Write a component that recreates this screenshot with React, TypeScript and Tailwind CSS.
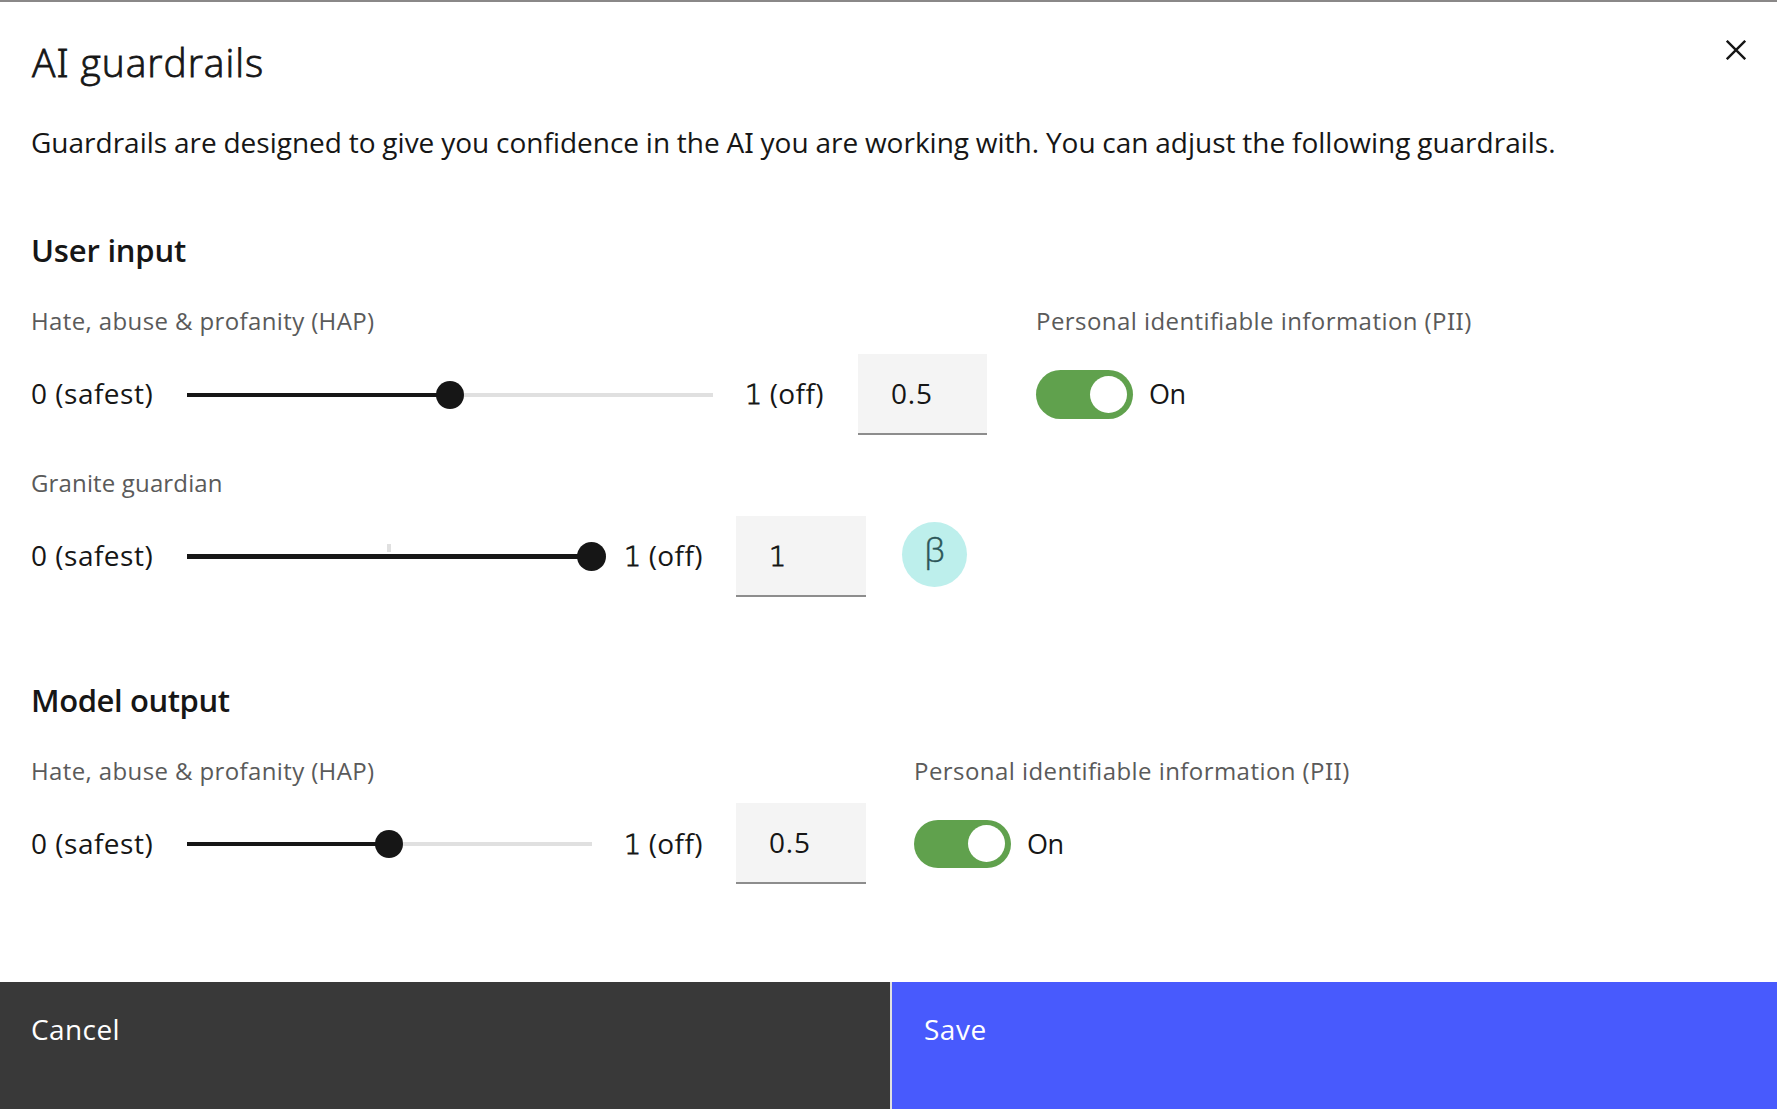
import type { ReactNode } from "react";

const SerifI = ({ children }: { children: ReactNode }) => (
  <span className="font-['Noto_Sans',sans-serif]">{children}</span>
);

// Numeral with a foot serif, thickened to the weight of the surrounding text.
const One = () => (
  <span className="inline-block w-[17px] text-[27px] leading-none font-extralight tracking-normal font-['DejaVu_Sans',sans-serif] [-webkit-text-stroke:0.9px_#161616]">
    1
  </span>
);

function Slider({
  percent,
  full = false,
  tick = false,
  width,
}: {
  percent: number;
  full?: boolean;
  tick?: boolean;
  width: string;
}) {
  return (
    <div className={`relative flex h-[81px] shrink-0 items-center ${width}`}>
      <div className={`w-full bg-[#e0e0e0] ${full ? "h-[5px]" : "h-1"}`}>
        <div className="h-full bg-[#161616]" style={{ width: `${percent}%` }} />
      </div>
      {tick && <span className="absolute top-[28px] left-[200px] h-2 w-1 bg-[#e0e0e0]" />}
      <span
        className={`absolute rounded-full bg-[#161616] ${full ? "top-[26px] -ml-[15px] size-[29px]" : "top-[27px] -ml-[14.5px] size-7"}`}
        style={{ left: `${percent}%` }}
      />
    </div>
  );
}

function NumberField({ width, children }: { width: string; children: ReactNode }) {
  return (
    <div
      className={`flex h-[81px] shrink-0 items-center border-b-2 border-[#8d8d8d] bg-[#f4f4f4] pb-[2px] pl-[33px] tracking-[0.8px] ${width}`}
    >
      <span>{children}</span>
    </div>
  );
}

function Label({ children, spacing }: { children: ReactNode; spacing: string }) {
  return (
    <div
      className={`h-8 text-2xl leading-8 whitespace-nowrap text-[#5a5a5a] [font-feature-settings:'liga'_1] ${spacing}`}
    >
      {children}
    </div>
  );
}

const Safest = ({ pad = "pb-[3px]" }: { pad?: string }) => (
  <span className={`w-[156px] shrink-0 tracking-[0.5px] whitespace-nowrap ${pad}`}>0 (safest)</span>
);

const Off = ({ width, pad = "pb-[3px]" }: { width: string; pad?: string }) => (
  <span className={`shrink-0 tracking-[0.4px] whitespace-nowrap ${pad} ${width}`}>
    <One /> (off)
  </span>
);

function PiiToggle({ height, gap, pad }: { height: string; gap: string; pad: string }) {
  return (
    <div>
      <Label spacing="tracking-[0.44px]">
        Personal identifiable information (P<SerifI>II</SerifI>)
      </Label>
      <div className={`flex h-[81px] items-center ${gap}`}>
        <div className={`flex w-[97px] items-center justify-end rounded-full bg-[#60a14d] pr-1.5 ${height}`}>
          <span className="size-[37px] rounded-full bg-white" />
        </div>
        <span className={`ml-4 text-[27px] tracking-[-0.4px] ${pad}`}>On</span>
      </div>
    </div>
  );
}

const HapLabel = () => <Label spacing="tracking-[0.38px]">Hate, abuse &amp; profanity (HAP)</Label>;

export default function App() {
  return (
    <div className="flex h-[1109px] w-[1777px] flex-col overflow-hidden border-t-2 border-[#8a8888] bg-white font-['Open_Sans',sans-serif] text-[28px] leading-9 text-[#161616]">
      <main className="flex-1 pl-[31px]">
        <header className="flex justify-between pt-9">
          <h1 className="pl-px text-[39px] leading-[48px] font-light tracking-[0.95px] [-webkit-text-stroke:0.8px_#161616]">
            A<SerifI>I</SerifI> guardrails
          </h1>
          <button className="mt-[2px] mr-[31px] size-5" aria-label="Close">
            <svg viewBox="0 0 20 20" className="block size-5" stroke="#161616" strokeWidth="2.4" fill="none">
              <path d="M0.8 0.8 19.2 19.2M19.2 0.8 0.8 19.2" />
            </svg>
          </button>
        </header>
        <p className="mt-[38px] whitespace-nowrap [word-spacing:-0.48px]">
          Guardrails are designed to give you confidence in the A<SerifI>I</SerifI> you are working with. You can
          adjust the following guardrails.
        </p>

        <section className="mt-[70px]">
          <h2 className="text-[31px] leading-10 font-semibold tracking-[-0.2px]">User input</h2>
          <div className="mt-[35px] flex">
            <div className="w-[1005px]">
              <HapLabel />
              <div className="mt-[17px] flex items-center">
                <Safest />
                <Slider percent={50} width="w-[526px]" />
                <Off width="ml-8 w-[113px]" />
                <NumberField width="w-[129px]">0.5</NumberField>
              </div>
            </div>
            <PiiToggle height="h-[49px]" gap="mt-[17px]" pad="pb-[2px]" />
          </div>
          <div className="mt-8">
            <Label spacing="tracking-[0.15px]">Granite guardian</Label>
            <div className="mt-[17px] flex items-center">
              <Safest />
              <Slider percent={100} full tick width="w-[405px]" />
              <Off width="ml-8 w-[112px]" />
              <NumberField width="w-[130px]">
                <One />
              </NumberField>
              <span className="mb-1 ml-9 flex size-[65px] items-center justify-center rounded-full bg-[#bdefec] pb-[9px] text-[33px] font-light text-[#2c5557] [-webkit-text-stroke:0.5px_#2c5557]">
                β
              </span>
            </div>
          </div>
        </section>

        <section className="mt-[83px]">
          <h2 className="text-[31px] leading-10 font-semibold tracking-[-0.4px]">Model output</h2>
          <div className="mt-[35px] flex">
            <div className="w-[883px]">
              <HapLabel />
              <div className="mt-4 flex items-center">
                <Safest pad="pb-px" />
                <Slider percent={50} width="w-[405px]" />
                <Off width="ml-8 w-[112px]" pad="pb-px" />
                <NumberField width="w-[130px]">0.5</NumberField>
              </div>
            </div>
            <PiiToggle height="h-12" gap="mt-4" pad="pb-0" />
          </div>
        </section>
      </main>

      <footer className="flex h-[127px] shrink-0 gap-[2px] bg-[#e0e0e0] text-white">
        <button className="w-[890px] bg-[#393939] pt-[29px] pl-[31px] text-left tracking-[0.4px]">
          <span className="block h-[98px]">Cancel</span>
        </button>
        <button className="flex-1 bg-[#485afd] pt-[29px] pl-8 text-left tracking-[0.5px]">
          <span className="block h-[98px]">Save</span>
        </button>
      </footer>
    </div>
  );
}
